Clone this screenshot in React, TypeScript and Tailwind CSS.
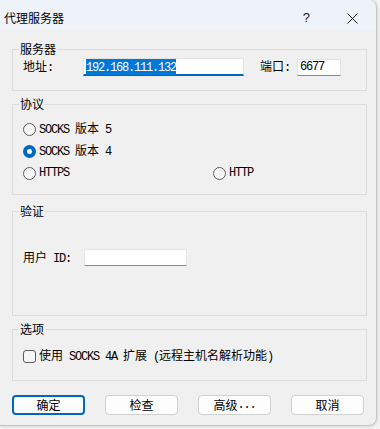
import React from "react";

const CJK = "font-['Noto_Sans_CJK_SC','Noto_Sans',sans-serif]";

function M({ children }: { children: React.ReactNode }) {
  return (
    <span className="font-['Liberation_Mono','Noto_Sans_CJK_SC',monospace] text-[12px] tracking-[-1.2px]">
      {children}
    </span>
  );
}

function Radio({ checked }: { checked?: boolean }) {
  return checked ? (
    <span className="flex h-[13px] w-[13px] shrink-0 items-center justify-center rounded-full bg-[#0067c0]">
      <span className="h-[5px] w-[5px] rounded-full bg-white" />
    </span>
  ) : (
    <span className="h-[13px] w-[13px] shrink-0 rounded-full border border-[#5d5d5d] bg-[#f6f6f6]" />
  );
}

function Legend({ children }: { children: React.ReactNode }) {
  return (
    <legend className={`ml-[6px] px-[1px] text-[12px] leading-[14px] text-black ${CJK}`}>{children}</legend>
  );
}

function Btn({ children, primary }: { children: React.ReactNode; primary?: boolean }) {
  return (
    <div
      className={`flex h-[20px] w-[73px] items-center justify-center rounded-[4px] bg-[#fdfdfd] text-[12px] leading-[14px] text-black ${CJK} ${
        primary ? "border-2 border-[#0067c0]" : "border border-[#d0d0d0]"
      }`}
    >
      {children}
    </div>
  );
}

export default function App() {
  return (
    <div className="h-[429px] w-[380px] overflow-hidden bg-[#f4f4f4]">
      <div className="flex h-[426px] w-[377px] flex-col overflow-hidden rounded-r-[8px] border-r border-b border-[#c4c4c4] bg-[#f0f0f0] shadow-[0_0_4px_rgba(0,0,0,0.18)]">
        {/* title bar */}
        <div className="flex h-[30px] shrink-0 items-center bg-[#eef3f9] pl-[4px] pt-[6px]">
          <span className={`text-[12px] leading-[14px] text-black ${CJK}`}>代理服务器</span>
          <span className="ml-auto font-['Liberation_Sans',sans-serif] text-[13px] leading-[14px] text-[#1a1a1a]">?</span>
          <svg className="ml-[37px] mr-[18px]" width="11" height="11" viewBox="0 0 11 11">
            <path d="M0.5 0.5 L10.5 10.5 M10.5 0.5 L0.5 10.5" stroke="#1a1a1a" strokeWidth="1" fill="none" />
          </svg>
        </div>

        {/* body */}
        <div className={`flex flex-col pl-[12px] pr-[9px] text-[12px] text-black ${CJK}`}>
          {/* 服务器 */}
          <fieldset className="mt-[12px] min-w-0 border border-[#dcdcdc]">
            <Legend>服务器</Legend>
            <div className="mt-[2px] flex h-[18px] items-center pl-[10px] pb-0">
              <span className="w-[60px] whitespace-pre leading-[14px]">
                地址<M>:</M>
              </span>
              <div className="flex h-[18px] w-[161px] items-center border-x border-t border-x-[#e3e3e3] border-t-[#e3e3e3] border-b-2 border-b-[#0067c0] bg-white pl-[2px]">
                <span className="bg-[#0078d7] leading-[13px] text-white">
                  <M>192.168.111.132</M>
                </span>
              </div>
              <span className="ml-[16px] w-[37px] whitespace-pre leading-[14px]">
                端口<M>:</M>
              </span>
              <div className="flex h-[17px] w-[44px] items-center border-x border-t border-x-[#e3e3e3] border-t-[#e3e3e3] border-b border-b-[#8a8a8a] bg-white pl-[2px]">
                <M>6677</M>
              </div>
            </div>
            <div className="h-[14px]" />
          </fieldset>

          {/* 协议 */}
          <fieldset className="mt-[6px] min-w-0 border border-[#dcdcdc]">
            <Legend>协议</Legend>
            <div className="flex flex-col pl-[10px] pt-[7px] pb-[10px]">
              <div className="flex h-[22px] items-center gap-[3px] whitespace-pre leading-[14px]">
                <Radio />
                <span>
                  <M>SOCKS </M>版本<M> 5</M>
                </span>
              </div>
              <div className="flex h-[22px] items-center gap-[3px] whitespace-pre leading-[14px]">
                <Radio checked />
                <span>
                  <M>SOCKS </M>版本<M> 4</M>
                </span>
              </div>
              <div className="flex h-[22px] items-center whitespace-pre leading-[14px]">
                <div className="flex w-[190px] items-center gap-[3px]">
                  <Radio />
                  <M>HTTPS</M>
                </div>
                <div className="flex items-center gap-[3px]">
                  <Radio />
                  <M>HTTP</M>
                </div>
              </div>
            </div>
          </fieldset>

          {/* 验证 */}
          <fieldset className="mt-[9px] min-w-0 border border-[#dcdcdc]">
            <Legend>验证</Legend>
            <div className="flex h-[17px] items-center pl-[10px] mt-[31px] mb-[49px]">
              <span className="w-[61px] whitespace-pre leading-[14px]">
                用户<M> ID:</M>
              </span>
              <div className="h-[17px] w-[103px] border-x border-t border-x-[#e6e6e6] border-t-[#e6e6e6] border-b border-b-[#8a8a8a] bg-white" />
            </div>
          </fieldset>

          {/* 选项 */}
          <fieldset className="mt-[6px] min-w-0 border border-[#dcdcdc]">
            <Legend>选项</Legend>
            <div className="mt-[11px] mb-[15px] flex h-[18px] items-center gap-[3px] whitespace-pre pl-[10px] leading-[14px]">
              <span className="h-[13px] w-[13px] shrink-0 rounded-[3px] border border-[#5d5d5d] bg-[#f6f6f6]" />
              <span>
                使用<M> SOCKS 4A </M>扩展<M> (</M>远程主机名解析功能<M>)</M>
              </span>
            </div>
          </fieldset>

          {/* buttons */}
          <div className="mt-[14px] flex gap-[20px]">
            <Btn primary>确定</Btn>
            <Btn>检查</Btn>
            <Btn>
              高级<M>...</M>
            </Btn>
            <Btn>取消</Btn>
          </div>
        </div>
      </div>
    </div>
  );
}
